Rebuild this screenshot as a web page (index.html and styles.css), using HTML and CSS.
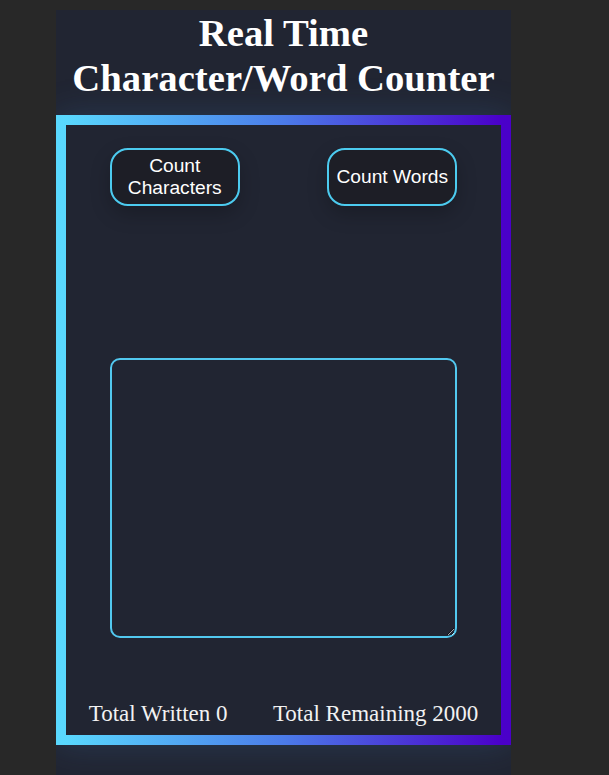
FILE: index.html
```html
<!DOCTYPE html>
<html lang="en">
<head>
<meta charset="utf-8">
<title>Real Time Character/Word Counter</title>
<link rel="stylesheet" href="styles.css">
</head>
<body>
<div class="app">
  <h1 class="title">Real Time Character/Word Counter</h1>
  <div class="box">
    <div class="buttons">
      <button class="btn">Count Characters</button>
      <button class="btn">Count Words</button>
    </div>
    <textarea class="input"></textarea>
    <div class="stats">
      <span class="stat">Total Written 0</span>
      <span class="stat">Total Remaining 2000</span>
    </div>
  </div>
</div>
</body>
</html>
```

FILE: styles.css
```css
html, body {
  margin: 0;
  padding: 0;
  background: #282828;
  height: 100%;
  overflow: hidden;
}
.app {
  margin: 10px 0 0 56px;
  width: 455px;
  min-height: 900px;
  background: #212532;
  overflow: hidden;
  font-family: "Liberation Serif", "Times New Roman", serif;
}
.title {
  margin: 0 0 15px 0;
  padding: 1px 12px 0 12px;
  font-size: 38.7px;
  font-weight: bold;
  color: #ffffff;
  text-align: center;
  line-height: 1.15;
}
.box {
  border: 10px solid;
  border-image: linear-gradient(to right, #59d8fe, #4b7be9 50%, #4a00c9) 1;
  padding: 23px 0 8px 0;
  display: flex;
  flex-direction: column;
  align-items: center;
  box-shadow: 0 0 34px rgba(70, 130, 200, 0.22);
}
.buttons {
  align-self: stretch;
  display: flex;
  justify-content: space-around;
  align-items: stretch;
}
.btn {
  width: 130px;
  padding: 5px 3px;
  background: #1d1e26;
  color: #ffffff;
  border: 2px solid #4ccbef;
  border-radius: 18px;
  font-family: "Liberation Sans", Arial, sans-serif;
  font-size: 19.2px;
  line-height: 22px;
  box-shadow: 0 8px 20px rgba(0, 0, 0, 0.22);
}
.input {
  margin-top: 152px;
  width: 347px;
  height: 280px;
  box-sizing: border-box;
  background: transparent;
  border: 2px solid #52c8ef;
  border-radius: 10px;
  resize: both;
  color: #fff;
  outline: none;
}
.stats {
  margin-top: 63px;
  align-self: stretch;
  display: flex;
  justify-content: space-around;
  font-size: 23px;
  color: #f2f2f2;
}
```
